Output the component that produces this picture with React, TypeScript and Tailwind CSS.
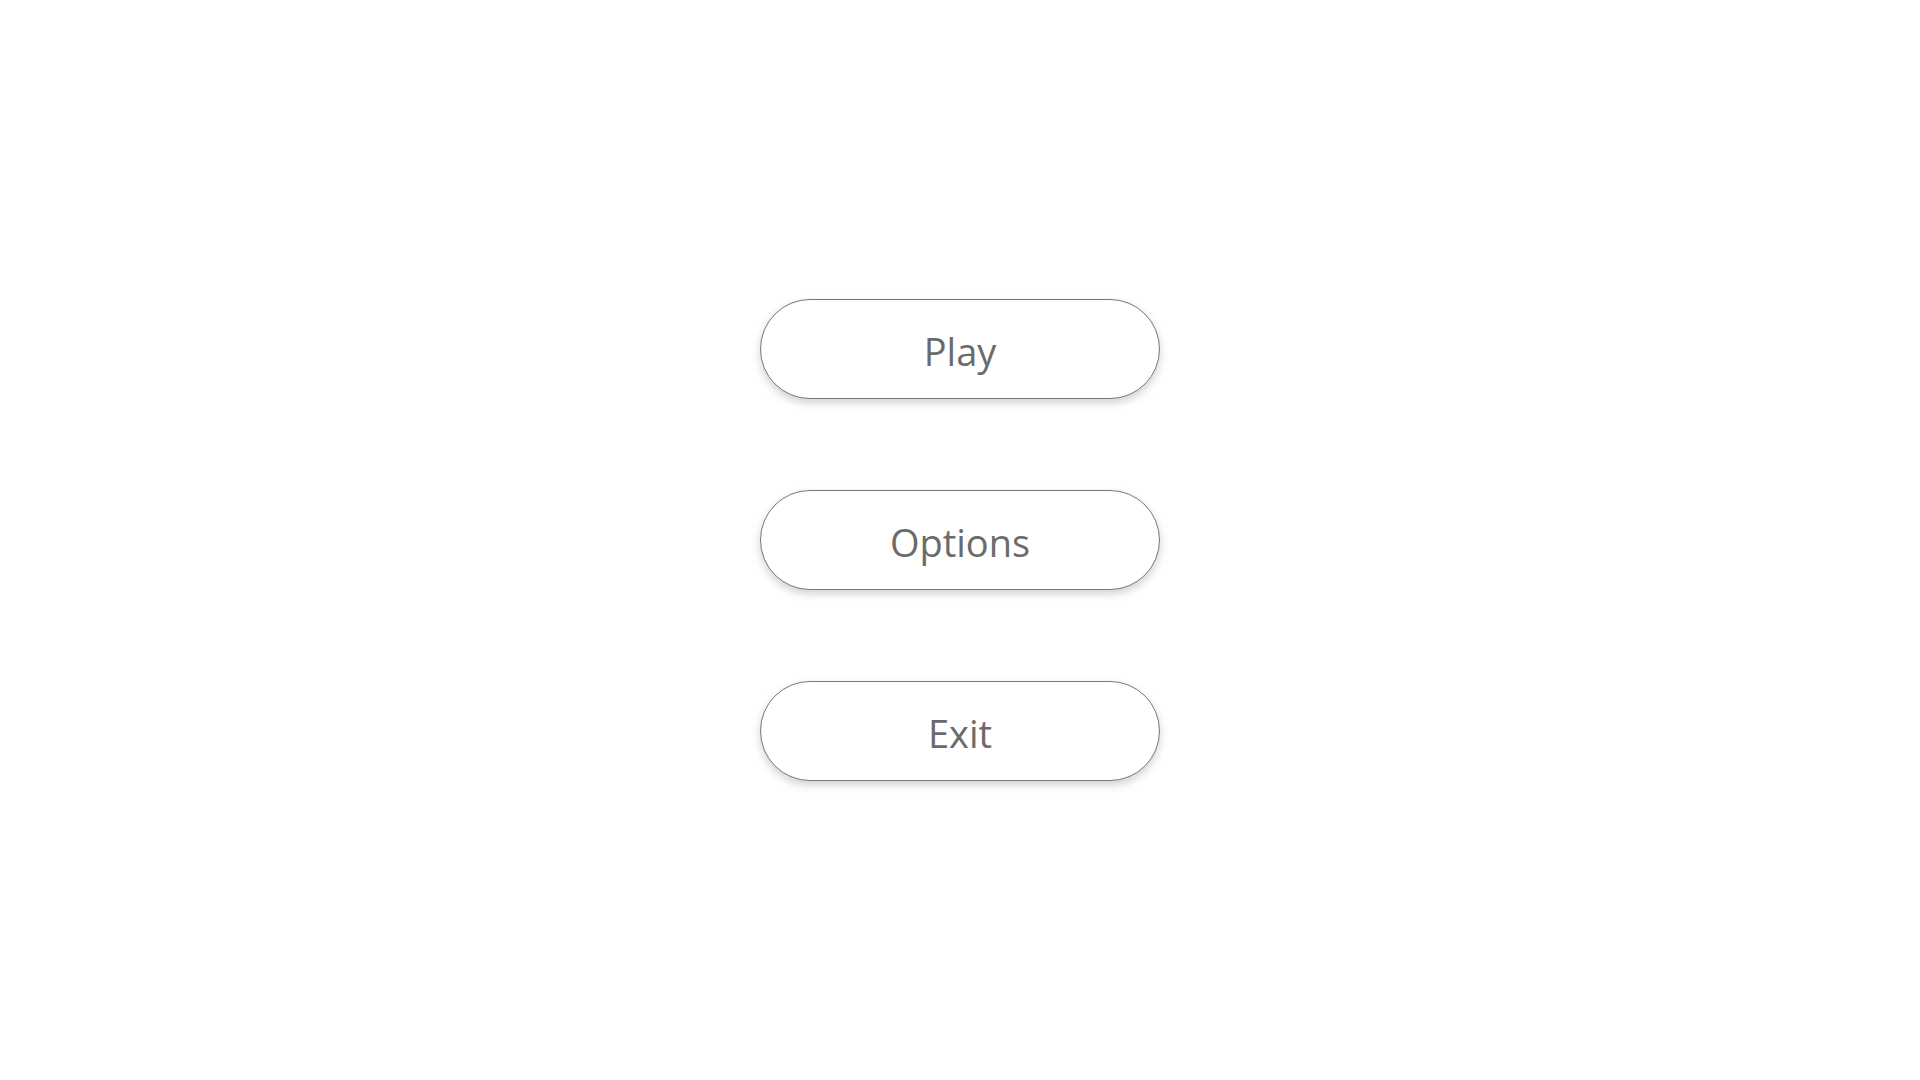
import React from 'react';

const MainMenu = () => {
  const items = ['Play', 'Options', 'Exit'];

  return (
    <div className="h-screen w-full bg-white flex flex-col items-center justify-center gap-[91px]">
      {items.map((label) => (
        <button
          key={label}
          className="w-[400px] h-[100px] rounded-full border border-[#777777] bg-white shadow-[0_4px_8px_rgba(0,0,0,0.18)] text-[38px] text-[#6b6b6b] font-['Open_Sans',sans-serif] pt-[4px]"
        >
          {label}
        </button>
      ))}
    </div>
  );
};

export default MainMenu;
